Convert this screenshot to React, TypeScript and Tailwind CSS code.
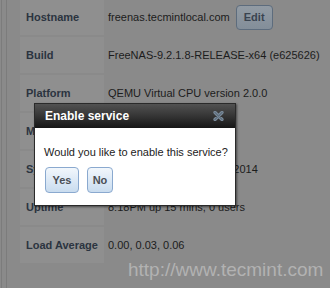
import React from "react";

const rows: { label: string; value: string; edit?: boolean }[] = [
  { label: "Hostname", value: "freenas.tecmintlocal.com", edit: true },
  { label: "Build", value: "FreeNAS-9.2.1.8-RELEASE-x64 (e625626)" },
  { label: "Platform", value: "QEMU Virtual CPU version 2.0.0" },
  { label: "Memory", value: "2008MB" },
  { label: "System Time", value: "Tue Dec 16 20:18:52 IST 2014" },
  { label: "Uptime", value: "8:18PM up 15 mins, 0 users" },
  { label: "Load Average", value: "0.00, 0.03, 0.06" },
];

function CloseIcon() {
  return (
    <svg width="11" height="10" viewBox="0 0 11 10">
      <path d="M2 1.5 L9 8.5 M9 1.5 L2 8.5" stroke="#7d8d9e" strokeWidth="3.2" strokeLinecap="round" />
      <path d="M2 1.5 L9 8.5 M9 1.5 L2 8.5" stroke="#60707f" strokeWidth="1.4" strokeLinecap="round" />
    </svg>
  );
}

export default function App() {
  return (
    <div
      className="relative w-[330px] h-[288px] overflow-hidden bg-[#8a8a8a]"
      style={{ fontFamily: '"Liberation Sans", Arial, sans-serif' }}
    >
      {/* page behind the overlay */}
      <div className="flex h-full">
        <div className="w-[2px] border-r border-[#7c7c7c] h-full" />
        <div className="w-[4px]" />
        <div className="w-[1px] bg-[#7c7c7c] h-full" />
        <div className="flex flex-col gap-[2px] pl-[13px] -mt-[1px]">
          {rows.map((r) => (
            <div key={r.label} className="flex h-[36px] items-center">
              <div className="w-[84px] h-full bg-[#8f8f8f] flex items-center pl-[6px] text-[11px] font-bold text-[#2b3440] whitespace-nowrap">
                {r.label}
              </div>
              <div className="pl-[4px] flex items-center gap-[6px] text-[11px] text-[#1c1c1c] whitespace-nowrap">
                <span>{r.value}</span>
                {r.edit && (
                  <span className="h-[25px] w-[37px] rounded-[4px] border border-[#5d6c7d] bg-gradient-to-b from-[#929ba4] to-[#838e99] flex items-center justify-center text-[11px] font-bold text-[#3a4450]">
                    Edit
                  </span>
                )}
              </div>
            </div>
          ))}
        </div>
      </div>

      {/* watermark */}
      <div className="absolute left-[128px] top-[259px] text-[19px] leading-[22px] text-[#b2b2b2] whitespace-nowrap">
        http://www.tecmint.com
      </div>

      {/* dialog */}
      <div className="absolute left-[34px] top-[103px] w-[202px] h-[103px] flex flex-col border border-[#2a2a2a] shadow-[1px_1px_2px_rgba(0,0,0,0.5)]">
        <div className="h-[24px] bg-gradient-to-b from-[#525252] via-[#353535] to-[#161616] flex items-center justify-between pl-[10px] pr-[11px]">
          <span className="text-[12px] font-bold text-white">Enable service</span>
          <CloseIcon />
        </div>
        <div className="flex-1 bg-white pl-[9px] pt-[17px]">
          <p className="text-[11px] leading-[14px] text-[#222] whitespace-nowrap">Would you like to enable this service?</p>
          <div className="flex gap-[8px] mt-[8px] pl-[1px]">
            <button className="h-[26px] w-[34px] rounded-[4px] border border-[#8aa9cf] bg-gradient-to-b from-[#f2f7fc] to-[#c9dcef] text-[11px] font-bold text-[#4a4f55]">
              Yes
            </button>
            <button className="h-[26px] w-[26px] rounded-[4px] border border-[#8aa9cf] bg-gradient-to-b from-[#f2f7fc] to-[#c9dcef] text-[11px] font-bold text-[#4a4f55]">
              No
            </button>
          </div>
        </div>
      </div>
    </div>
  );
}
